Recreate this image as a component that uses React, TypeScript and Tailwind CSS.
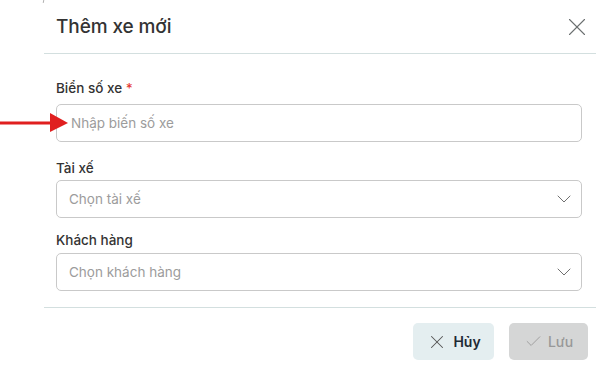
import { Check, ChevronDown, X } from "lucide-react";

const fields = [
  { label: "Tài xế", placeholder: "Chọn tài xế", top: "mt-[18px]", gap: "mb-[4px]" },
  { label: "Khách hàng", placeholder: "Chọn khách hàng", top: "mt-[14px]", gap: "mb-[5px]" },
];

export default function App() {
  return (
    <main className="relative h-[372px] w-[596px] overflow-hidden bg-white font-['Inter',sans-serif] text-[#2f3437]">
      <span className="absolute left-[43px] top-0 h-[3px] w-px rotate-12 bg-[#b0b0b0]" />

      <div className="ml-[44px] flex flex-col">
        <header className="flex h-[54px] items-center justify-between border-b border-[#d3dfdf] pl-3 pr-[4px]">
          <h2 className="text-[19px] font-medium leading-6 tracking-[-0.1px] text-[#333]">Thêm xe mới</h2>
          <X size={30} strokeWidth={0.9} className="text-[#6b6f70]" />
        </header>

        <section className="pb-4 pl-3 pr-[14px] pt-[26px]">
          <label className="mb-2 block h-4 text-[13.5px] font-medium leading-4 text-[#333]">
            Biển số xe <span className="text-[#e53935]">*</span>
          </label>
          <div className="flex h-[38px] items-center rounded-[5px] border border-[#c9c9c9] px-[14px] text-[13.5px] text-[#9c9c9c]">
            Nhập biến số xe
          </div>

          {fields.map((field) => (
            <div key={field.label} className={field.top}>
              <label className={`block h-4 text-[13.5px] font-medium leading-4 text-[#333] ${field.gap}`}>
                {field.label}
              </label>
              <div className="flex h-[38px] items-center justify-between rounded-[5px] border border-[#c9c9c9] pl-3 pr-[5px] text-[13.5px] text-[#9c9c9c]">
                {field.placeholder}
                <ChevronDown size={24} strokeWidth={1} className="text-[#707070]" />
              </div>
            </div>
          ))}
        </section>

        <footer className="flex justify-end gap-[15px] border-t border-[#d3dfdf] pr-2 pt-[15px]">
          <button
            type="button"
            className="flex h-[37px] w-[81px] items-center justify-center gap-[5px] rounded-[5px] bg-[#e4eef0] text-[14px] font-semibold text-[#1e2a35]"
          >
            <X size={22} strokeWidth={1.1} className="text-[#555]" />
            Hủy
          </button>
          <button
            type="button"
            className="flex h-[37px] w-[79px] items-center justify-center gap-[5px] rounded-[5px] bg-[#d5d6d6] text-[14px] font-medium text-[#989898]"
          >
            <Check size={19} strokeWidth={1.1} />
            Lưu
          </button>
        </footer>
      </div>

      <svg className="absolute left-0 top-[113px]" width="70" height="20" viewBox="0 0 70 20">
        <rect x="0" y="8.5" width="53" height="3" fill="#e01f1f" />
        <polygon points="50,0 68,10 50,19" fill="#e01f1f" />
      </svg>
    </main>
  );
}
